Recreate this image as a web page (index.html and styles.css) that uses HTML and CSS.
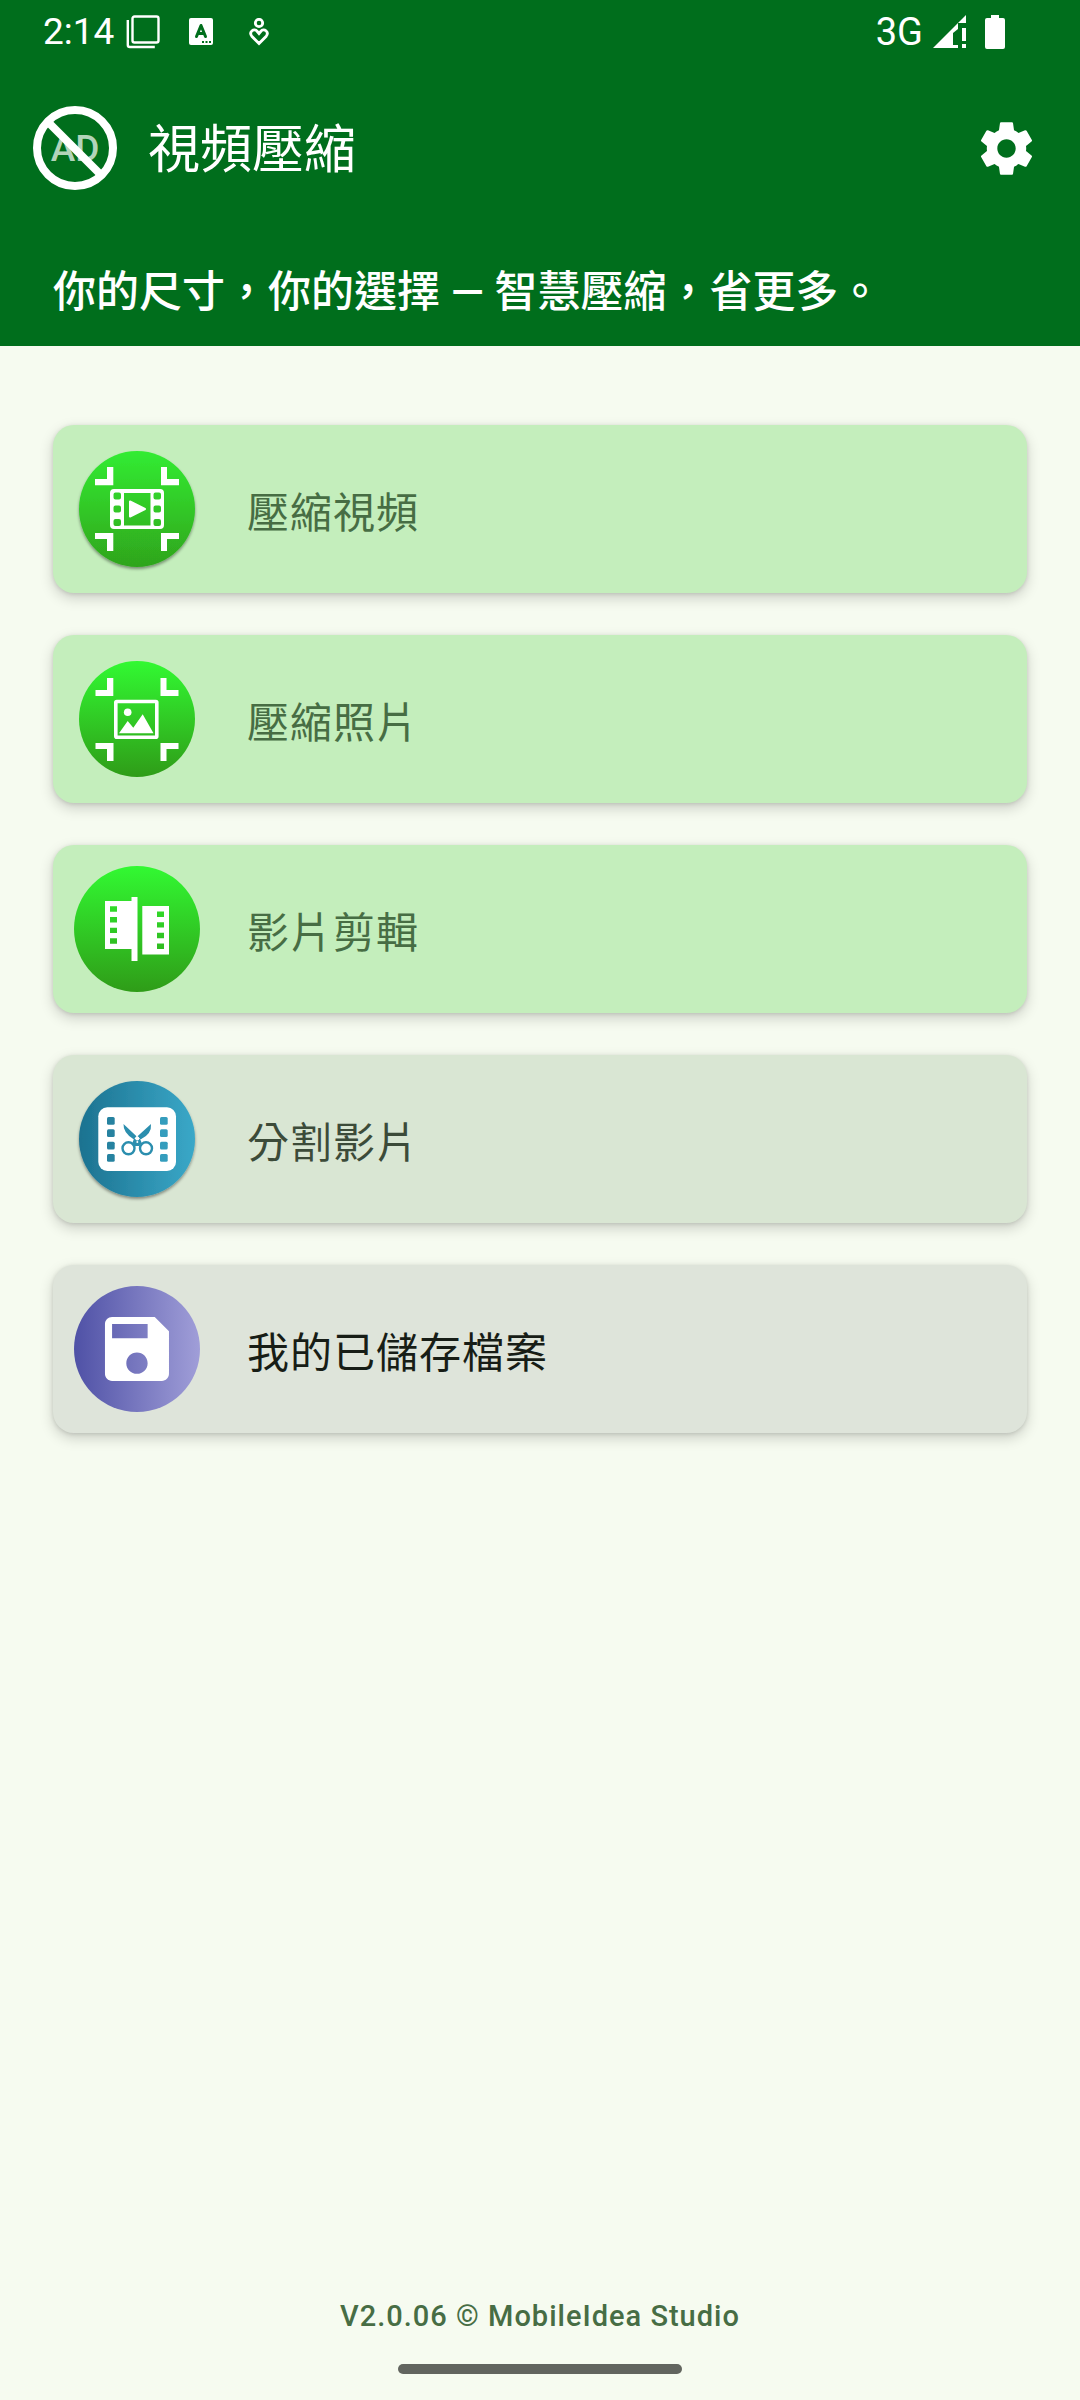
FILE: index.html
```html
<!DOCTYPE html>
<html lang="zh-Hant">
<head>
<meta charset="utf-8">
<meta name="viewport" content="width=device-width, initial-scale=1">
<title>視頻壓縮</title>
<link rel="stylesheet" href="styles.css">
</head>
<body>
<header class="header">
  <div class="status">
    <span class="status-time">2:14</span>
    <div class="status-notes">
      <svg width="34" height="34" viewBox="0 0 34 34" fill="none" stroke="#fff" stroke-width="2.400" aria-hidden="true"><rect x="6.500" y="1.500" width="26" height="26" rx="2"/><path d="M1.800 5v25q0 2 2 2h25"/></svg>
      <svg width="24" height="27" viewBox="0 0 24 27" aria-hidden="true"><rect width="24" height="27" rx="2" fill="#fff"/><path d="M7.500 18.500 12 7.500l4.500 11M9 15.500h6" fill="none" stroke="#006e1c" stroke-width="3" stroke-linecap="round" stroke-linejoin="round"/><path d="M13 23h2v2h-2zm3.500 0h2v2h-2zm3.500 0h2v2h-2z" fill="#006e1c"/></svg>
      <svg width="34" height="28" viewBox="-7 0 34 28" fill="none" stroke="#fff" stroke-width="2.800" aria-hidden="true"><circle cx="10" cy="5" r="3.700"/><path d="M10 25.500 2.800 18.200C-.5 14 5 9.500 8.300 13.500L10 15.500l1.700-2c3.300-4 8.800.5 5.500 4.700z"/></svg>
    </div>
    <span class="status-network">3G</span>
    <svg class="status-signal" width="34" height="34" viewBox="0 0 34 34" fill="#fff" aria-hidden="true"><path d="M0 33 33 0v8h-8v6l-5 4v12h5v3zM29 13h4v13h-4zm0 16h4v4h-4z"/></svg>
    <svg width="20" height="34" viewBox="0 0 20 34" fill="#fff" aria-hidden="true"><path d="M6 0h8v3h4q2 0 2 2v27q0 2-2 2H2q-2 0-2-2V5q0-2 2-2h4z"/></svg>
  </div>
  <div class="toolbar">
    <button class="icon-button" type="button" aria-label="AD">
      <svg width="84" height="84" viewBox="0 0 84 84" aria-hidden="true"><text class="ad-text" x="42" y="55" text-anchor="middle">AD</text><circle cx="42" cy="42" r="38" fill="none" stroke="#fff" stroke-width="8"/><path d="m16 17 51 51" stroke="#fff" stroke-width="8"/></svg>
    </button>
    <h1 class="title">視頻壓縮</h1>
    <button class="icon-button" type="button" aria-label="設定">
      <svg width="63" height="63" viewBox="0 0 24 24" fill="#fff" aria-hidden="true"><path d="M19.430 12.980c.04-.32.070-.64.070-.98s-.03-.66-.07-.98l2.110-1.650c.19-.15.240-.42.120-.64l-2-3.460c-.12-.22-.39-.3-.61-.22l-2.490 1c-.52-.4-1.080-.73-1.690-.98l-.38-2.650C14.460 2.180 14.250 2 14 2h-4c-.25 0-.46.180-.49.420l-.38 2.650c-.61.250-1.170.590-1.690.98l-2.490-1c-.23-.09-.49 0-.61.220l-2 3.460c-.13.220-.07.490.12.640l2.110 1.650c-.04.320-.07.650-.07.980s.03.660.07.980l-2.110 1.650c-.19.150-.24.420-.12.640l2 3.460c.12.220.390.300.61.220l2.490-1c.52.400 1.080.730 1.690.98l.38 2.650c.03.240.240.420.49.420h4c.25 0 .46-.18.490-.42l.38-2.650c.61-.25 1.170-.59 1.690-.98l2.490 1c.23.090.490 0 .61-.22l2-3.460c.12-.22.070-.49-.12-.64l-2.110-1.650zM12 15.500c-1.930 0-3.500-1.570-3.500-3.500s1.570-3.500 3.500-3.500 3.500 1.570 3.500 3.500-1.570 3.500-3.500 3.500z"/></svg>
    </button>
  </div>
  <p class="tagline">你的尺寸，你的選擇 — 智慧壓縮，省更多。</p>
</header>
<main class="menu">
  <button class="card card-green" type="button">
    <svg width="126" height="126" viewBox="0 0 126 126" aria-hidden="true">
      <defs>
        <linearGradient id="green" x1="0" y1="0" x2="0" y2="1"><stop stop-color="#32f932"/><stop offset="1" stop-color="#2f9c18"/></linearGradient>
        <linearGradient id="green-soft" x1="0" y1="0" x2="0" y2="1"><stop stop-color="#32ec32"/><stop offset="1" stop-color="#2fa41c"/></linearGradient>
        <linearGradient id="blue"><stop stop-color="#1c7290"/><stop offset="1" stop-color="#3aa8c8"/></linearGradient>
        <linearGradient id="violet"><stop stop-color="#4f51a6"/><stop offset="1" stop-color="#a09ed8"/></linearGradient>
        <filter id="lift" x="-10%" y="-10%" width="120%" height="120%"><feDropShadow dx="0" dy="2" stdDeviation="1.500" flood-opacity=".4"/></filter>
      </defs>
      <circle cx="63" cy="63" r="58" fill="url(#green-soft)" filter="url(#lift)"/>
      <path fill="#fff" d="M33 21h6.300v18.300H21V33h12zM87 21h6v12h12v6.300H87zM21 87h18.300v18H33V93H21zM87 87h18v6H93v12h-6z"/>
      <path fill="#fff" fill-rule="evenodd" d="M40 43h46q4 0 4 4v32q0 4-4 4H40q-4 0-4-4V47q0-4 4-4zM50 47v32.500h26.500V47zM41.500 46.500h3.500q2 0 2 2v3q0 2-2 2h-3.500q-2 0-2-2v-3q0-2 2-2zm0 13h3.500q2 0 2 2v3q0 2-2 2h-3.500q-2 0-2-2v-3q0-2 2-2zm0 13.500h3.500q2 0 2 2v3q0 2-2 2h-3.500q-2 0-2-2v-3q0-2 2-2zM81.500 46.500H85q2 0 2 2v3q0 2-2 2h-3.500q-2 0-2-2v-3q0-2 2-2zm0 13H85q2 0 2 2v3q0 2-2 2h-3.500q-2 0-2-2v-3q0-2 2-2zm0 13.500H85q2 0 2 2v3q0 2-2 2h-3.500q-2 0-2-2v-3q0-2 2-2z"/>
      <path fill="#fff" stroke="#fff" stroke-width="2" stroke-linejoin="round" d="M56 55.500v15L71 63z"/>
    </svg>
    <span class="card-label">壓縮視頻</span>
  </button>
  <button class="card card-green" type="button">
    <svg width="126" height="126" viewBox="0 0 126 126" aria-hidden="true">
      <circle cx="63" cy="63" r="58" fill="url(#green)"/>
      <path fill="#fff" d="M33 22h6.300v18H21.500v-6H33zM86.500 22h6v12h12v6h-18zM21.500 87h18v18H33V93H21.500zM86.500 87h18v6h-12v12h-6z"/>
      <rect x="41.800" y="45.500" width="41" height="35.800" rx="1" fill="none" stroke="#fff" stroke-width="3.600"/>
      <circle cx="53.700" cy="56.300" r="3.800" fill="#fff"/>
      <path fill="#fff" d="m45 77.300 8.700-12.300 5.600 6.700 9.400-13.400 10.800 19z"/>
    </svg>
    <span class="card-label">壓縮照片</span>
  </button>
  <button class="card card-green" type="button">
    <svg width="126" height="126" viewBox="0 0 126 126" aria-hidden="true">
      <circle cx="63" cy="63" r="63" fill="url(#green)"/>
      <path fill="#fff" fill-rule="evenodd" d="M31 35h26.500v-4h6v64h-6V83H31zM36 40.300v5.400h7v-5.400zM36 51v5.400h7V51zM36 61.700v5.400h7v-5.400zM36 72.300v5.400h7v-5.400zM68.300 40H95v48.500H68.300zM83 45.500v5.400h7v-5.400zM83 56.200v5.400h7v-5.400zM83 66.800v5.400h7v-5.400zM83 77.500v5.400h7v-5.400z"/>
    </svg>
    <span class="card-label">影片剪輯</span>
  </button>
  <button class="card card-sage" type="button">
    <svg width="126" height="126" viewBox="0 0 126 126" aria-hidden="true">
      <circle cx="63" cy="63" r="58" fill="url(#blue)" filter="url(#lift)"/>
      <rect x="24.300" y="31.300" width="77.700" height="63.700" rx="9" fill="#fff"/>
      <g fill="#2682a0"><rect x="33" y="41" width="7.700" height="7.700" rx="1.500"/><rect x="33" y="53.300" width="7.700" height="7.700" rx="1.500"/><rect x="33" y="65.700" width="7.700" height="7.700" rx="1.500"/><rect x="33" y="78" width="7.700" height="7.700" rx="1.500"/></g>
      <g fill="#349dbd"><rect x="86" y="41" width="7.700" height="7.700" rx="1.500"/><rect x="86" y="53.300" width="7.700" height="7.700" rx="1.500"/><rect x="86" y="65.700" width="7.700" height="7.700" rx="1.500"/><rect x="86" y="78" width="7.700" height="7.700" rx="1.500"/></g>
      <g fill="#2b8eae"><path d="M49.500 48 62.500 60.300 60 63.500Q49 57 49.500 48zM77 48 63.500 60.300 66.500 63.500Q78 58 77 48z"/><path d="m60 63 6 0 2 4.500q-2 .5-2.500 2.500h-5q-.5-2-2.500-2.500z"/></g>
      <g fill="none" stroke="#2b8eae" stroke-width="2.400"><circle cx="54.500" cy="72.300" r="6"/><circle cx="72" cy="72.300" r="6"/></g>
      <circle cx="63.300" cy="62.500" r="2" fill="#fff"/><circle cx="63.300" cy="66" r="1" fill="#fff"/>
    </svg>
    <span class="card-label">分割影片</span>
  </button>
  <button class="card card-gray" type="button">
    <svg width="126" height="126" viewBox="0 0 126 126" aria-hidden="true">
      <circle cx="63" cy="63" r="63" fill="url(#violet)"/>
      <path fill="#fff" transform="translate(20.300 20.300) scale(3.556)" d="M17 3H5c-1.110 0-2 .9-2 2v14c0 1.100.89 2 2 2h14c1.100 0 2-.9 2-2V7l-4-4zm-5 16c-1.660 0-3-1.340-3-3s1.340-3 3-3 3 1.340 3 3-1.340 3-3 3zm3-10H5V5h10v4z"/>
    </svg>
    <span class="card-label">我的已儲存檔案</span>
  </button>
</main>
<footer class="footer">
  <p class="version">V2.0.06 © MobileIdea Studio</p>
  <div class="nav-handle"></div>
</footer>
</body>
</html>
```
FILE: styles.css
```css
* {
  box-sizing: border-box;
}

body {
  margin: 0;
  min-height: 100vh;
  display: flex;
  flex-direction: column;
  background: #f6fbf0;
  font-family: Roboto, "Noto Sans CJK TC", sans-serif;
}

h1,
p {
  margin: 0;
}

button {
  border: 0;
  padding: 0;
  background: none;
  font: inherit;
  color: inherit;
  cursor: pointer;
}

svg {
  display: block;
  flex: none;
}

.header {
  background: #006e1c;
  color: #fff;
}

.status {
  display: flex;
  align-items: center;
  height: 63px;
  padding: 0 75px 0 43px;
}

.status-time {
  font-size: 37px;
  line-height: 48px;
}

.status-notes {
  display: flex;
  align-items: center;
  gap: 29px;
  margin-left: 12px;
}

.status-network {
  margin-left: auto;
  font-size: 38px;
  line-height: 48px;
}

.status-signal {
  margin: 0 18px 0 10px;
}

.toolbar {
  display: flex;
  align-items: center;
  height: 170px;
  padding: 0 42px 0 33px;
}

.ad-text {
  font-size: 37px;
  font-weight: 500;
  fill: #b2d4ba;
}

.title {
  flex: 1;
  margin-left: 31px;
  padding-top: 6px;
  font-size: 52px;
  font-weight: 400;
  line-height: 72px;
}

.tagline {
  padding: 28px 53px 22px;
  font-size: 43px;
  font-weight: 500;
  line-height: 63px;
}

.menu {
  display: flex;
  flex-direction: column;
  gap: 42px;
  padding: 79px 53px;
}

.card {
  display: flex;
  align-items: center;
  gap: 47px;
  padding: 21px;
  border-radius: 21px;
  box-shadow: 0 5px 14px rgb(0 0 0 / 18%), 0 1px 4px rgb(0 0 0 / 12%);
  text-align: left;
}

.card-label {
  padding-top: 8px;
  font-size: 42px;
  letter-spacing: 1px;
  line-height: 63px;
}

.card-green {
  background: #c4eebc;
  color: #476d44;
}

.card-sage {
  background: #d9e6d3;
  color: #3c4b39;
}

.card-gray {
  background: #dee4da;
  color: #171d16;
}

.footer {
  display: flex;
  flex-direction: column;
  align-items: center;
  gap: 27px;
  margin-top: auto;
  padding-bottom: 26px;
}

.version {
  color: #476d44;
  font-size: 29px;
  font-weight: 500;
  letter-spacing: 1px;
  line-height: 42px;
}

.nav-handle {
  width: 284px;
  height: 10px;
  border-radius: 5px;
  background: #62655f;
}
```
